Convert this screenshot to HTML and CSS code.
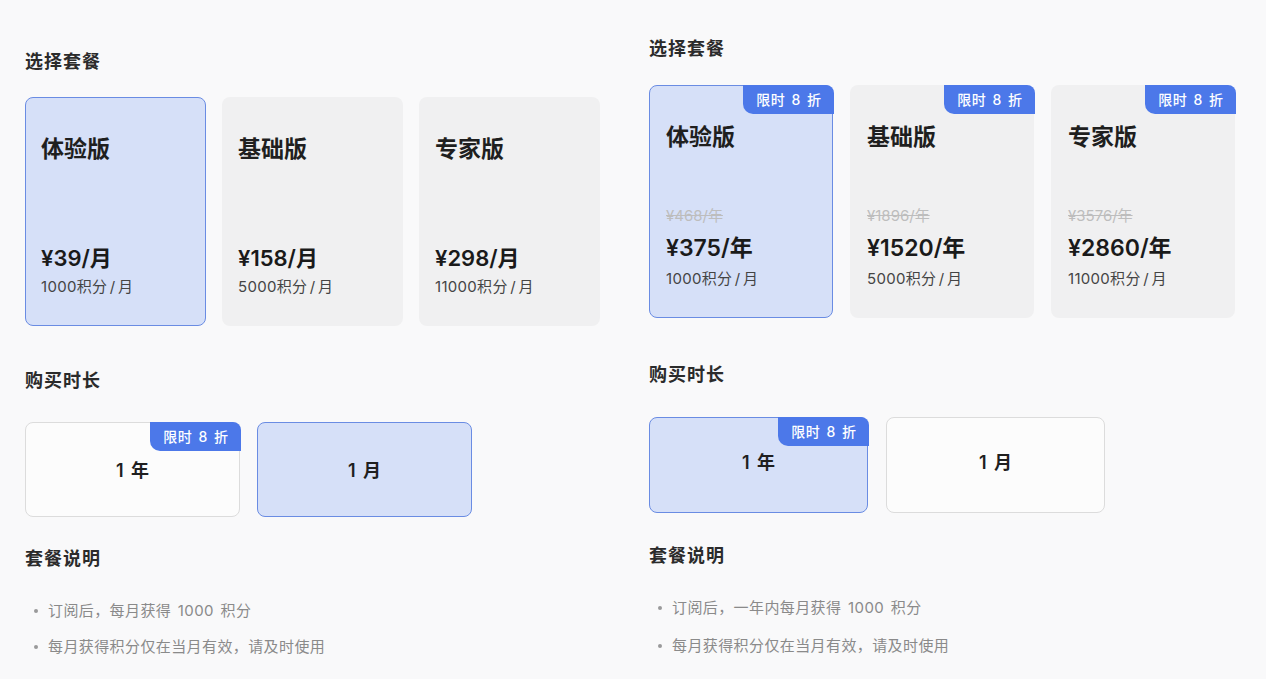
FILE: index.html
```html
<!DOCTYPE html>
<html lang="zh">
<head>
<meta charset="utf-8">
<link rel="stylesheet" href="styles.css">
</head>
<body>
<div class="page">
  <section class="panel panel-month">
    <h2 class="sec-title">选择套餐</h2>
    <div class="plans">
      <div class="plan selected">
        <div class="plan-name">体验版</div>
        <div class="plan-bottom">
          <div class="price">¥39/月</div>
          <div class="credits">1000积分 / 月</div>
        </div>
      </div>
      <div class="plan">
        <div class="plan-name">基础版</div>
        <div class="plan-bottom">
          <div class="price">¥158/月</div>
          <div class="credits">5000积分 / 月</div>
        </div>
      </div>
      <div class="plan">
        <div class="plan-name">专家版</div>
        <div class="plan-bottom">
          <div class="price">¥298/月</div>
          <div class="credits">11000积分 / 月</div>
        </div>
      </div>
    </div>
    <h2 class="sec-title t-duration">购买时长</h2>
    <div class="durations">
      <div class="dur"><span class="badge">限时 8 折</span>1 年</div>
      <div class="dur selected">1 月</div>
    </div>
    <h2 class="sec-title t-desc">套餐说明</h2>
    <ul class="notes">
      <li>订阅后，每月获得 1000 积分</li>
      <li>每月获得积分仅在当月有效，请及时使用</li>
    </ul>
  </section>

  <section class="panel panel-year">
    <h2 class="sec-title">选择套餐</h2>
    <div class="plans">
      <div class="plan selected">
        <span class="badge">限时 8 折</span>
        <div class="plan-name">体验版</div>
        <div class="plan-bottom">
          <div class="old">¥468/年</div>
          <div class="price">¥375/年</div>
          <div class="credits">1000积分 / 月</div>
        </div>
      </div>
      <div class="plan">
        <span class="badge">限时 8 折</span>
        <div class="plan-name">基础版</div>
        <div class="plan-bottom">
          <div class="old">¥1896/年</div>
          <div class="price">¥1520/年</div>
          <div class="credits">5000积分 / 月</div>
        </div>
      </div>
      <div class="plan">
        <span class="badge">限时 8 折</span>
        <div class="plan-name">专家版</div>
        <div class="plan-bottom">
          <div class="old">¥3576/年</div>
          <div class="price">¥2860/年</div>
          <div class="credits">11000积分 / 月</div>
        </div>
      </div>
    </div>
    <h2 class="sec-title t-duration">购买时长</h2>
    <div class="durations">
      <div class="dur selected"><span class="badge">限时 8 折</span>1 年</div>
      <div class="dur">1 月</div>
    </div>
    <h2 class="sec-title t-desc">套餐说明</h2>
    <ul class="notes">
      <li>订阅后，一年内每月获得 1000 积分</li>
      <li>每月获得积分仅在当月有效，请及时使用</li>
    </ul>
  </section>
</div>
</body>
</html>
```

FILE: styles.css
```css
* { box-sizing: border-box; }
html, body { margin: 0; padding: 0; }
body {
  background: #f9f9fa;
  font-family: "Inter", "Noto Sans CJK SC", sans-serif;
  color: #222;
  width: 1266px;
  height: 679px;
  overflow: hidden;
}
.page {
  display: flex;
  padding-left: 25px;
  gap: 49px;
}
.panel { display: flex; flex-direction: column; }
.panel-month { width: 575px; padding-top: 50px; }
.panel-year { width: 586px; padding-top: 37px; }

.sec-title {
  margin: 0;
  font-size: 18px;
  line-height: 24px;
  font-weight: 600;
  letter-spacing: 1px;
  color: #2b2b2b;
}

.plans { display: flex; gap: 16px; }
.panel-month .plans { margin-top: 23px; }
.panel-year .plans { margin-top: 24px; gap: 17px; }

.plan {
  position: relative;
  flex: 1;
  background: #f0f0f1;
  border: 1.5px solid transparent;
  border-radius: 8px;
  display: flex;
  flex-direction: column;
  justify-content: space-between;
  padding: 36px 15px 27px;
}
.panel-month .plan { height: 229px; }
.panel-year .plan { height: 233px; padding-left: 16px; }
.plan.selected {
  background: #d6e0f8;
  border-color: #6a8ce3;
}
.plan-name {
  font-size: 23px;
  line-height: 30px;
  font-weight: 600;
  color: #1f1f1f;
}
.price {
  font-size: 22px;
  line-height: 30px;
  font-weight: 600;
  color: #1a1a1a;
}
.panel-year .price { font-size: 23px; line-height: 34px; }
.credits {
  font-size: 15px;
  line-height: 22px;
  color: #444;
  margin-top: 3px;
  letter-spacing: 0.3px;
  word-spacing: -2px;
}
.old {
  font-size: 15px;
  line-height: 20px;
  color: #bdbdbd;
  text-decoration: line-through;
  margin-bottom: 5px;
}

.badge {
  position: absolute;
  top: -1.5px;
  right: -1.5px;
  background: #4c78e9;
  color: #fff;
  font-size: 14px;
  line-height: 29px;
  height: 29px;
  padding: 0 12px 0 13px;
  font-weight: 500;
  border-radius: 0 8px 0 10px;
  letter-spacing: 0.5px;
  word-spacing: 2px;
}

.panel-month .t-duration { margin-top: 43px; }
.panel-year .t-duration { margin-top: 45px; }

.durations { display: flex; gap: 17px; }
.panel-month .durations { margin-top: 29px; width: 447px; }
.panel-year .durations { margin-top: 30px; width: 456px; gap: 18px; }
.dur {
  position: relative;
  flex: 1;
  height: 95px;
  border: 1.5px solid #dcdcdc;
  border-radius: 8px;
  background: #fcfcfc;
  display: flex;
  align-items: center;
  justify-content: center;
  font-size: 18px;
  font-weight: 600;
  color: #1f1f1f;
  word-spacing: 3px;
}
.panel-year .dur { height: 96px; padding-bottom: 8px; }
.panel-month .dur { padding-bottom: 2px; }
.dur.selected {
  background: #d6e0f8;
  border-color: #6a8ce3;
}

.panel-month .t-desc { margin-top: 30px; }
.panel-year .t-desc { margin-top: 31px; }

.notes {
  list-style: none;
  margin: 0;
  padding: 0;
}
.notes li {
  position: relative;
  padding-left: 23px;
  font-size: 15px;
  line-height: 22px;
  letter-spacing: 0.4px;
  word-spacing: 2px;
  color: #8a8a8a;
}
.notes li::before {
  content: "";
  position: absolute;
  left: 9px;
  top: 9px;
  width: 4px;
  height: 4px;
  border-radius: 50%;
  background: #9a9a9a;
}
.panel-month .notes { margin-top: 29px; }
.panel-month .notes li + li { margin-top: 14px; }
.panel-year .notes { margin-top: 29px; }
.panel-year .notes li + li { margin-top: 16px; }
```
